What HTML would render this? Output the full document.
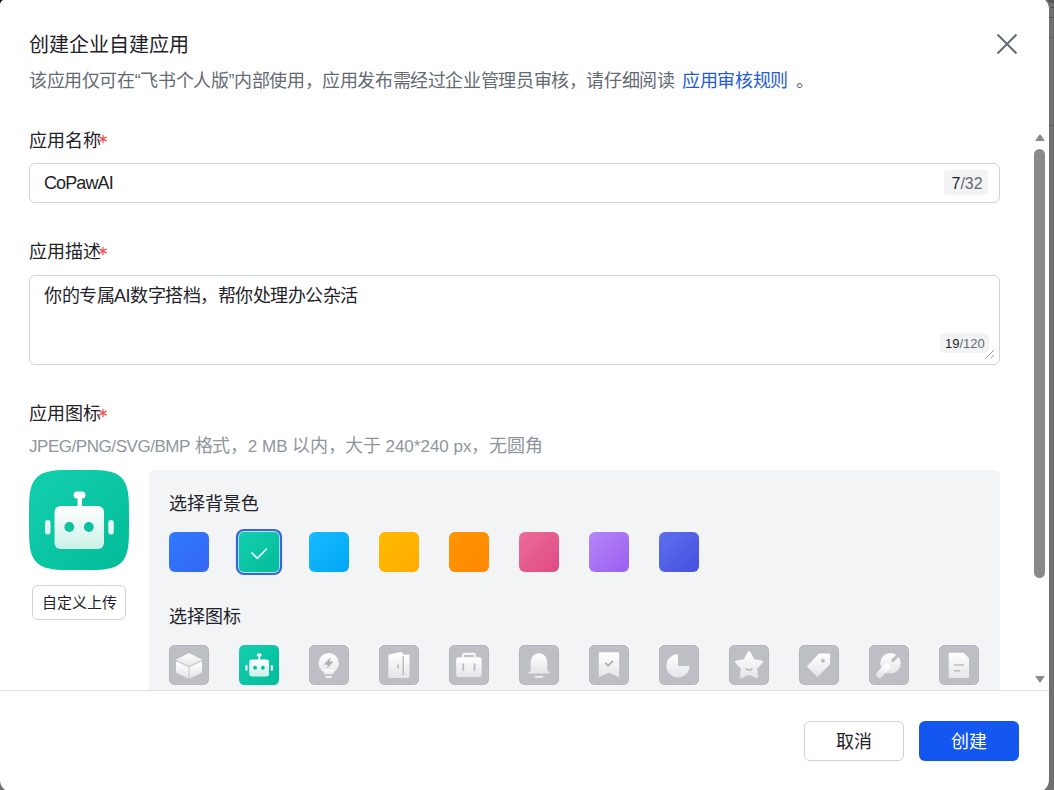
<!DOCTYPE html>
<html lang="zh-CN"><head><meta charset="utf-8">
<style>
*{box-sizing:border-box;margin:0;padding:0}
html,body{width:1054px;height:790px;overflow:hidden;background:#707070}
body{font-family:"Liberation Sans",sans-serif;color:#1f2329;position:relative}
.dlg{position:absolute;left:-12px;top:0;width:1061px;height:800px;background:#fff;border-radius:8px;overflow:hidden}
.a{position:absolute;white-space:nowrap}
.title{left:29px;top:32px;font-size:20px;line-height:26px;color:#1f2329}
.sub{left:29px;top:69px;font-size:18px;letter-spacing:-0.38px;line-height:24px;color:#646a73}
.sub a{color:#245bdb;text-decoration:none;margin:0 3px}
.lbl{font-size:18px;line-height:24px;color:#1f2329}
.lbl i{font-style:normal;color:#f54a45}
.inp{position:absolute;left:29px;width:971px;border:1px solid #d0d3d6;border-radius:6px;background:#fff}
.badge{position:absolute;background:#f2f3f5;border-radius:4px;color:#646a73}
.badge b{font-weight:normal;color:#1f2329}
.panel{position:absolute;left:149px;top:470px;width:851px;height:220px;background:#f3f4f6;border-radius:6px 6px 0 0}
.sw{position:absolute;width:40px;height:40px;border-radius:6px;top:532px}
.tile{position:absolute;width:40px;height:40px;border-radius:6px;top:645px;background:#bdbfc3;box-shadow:inset 0 0 0 1px #b3b6ba}
.c{font-size:18px;letter-spacing:-0.3px}
.btn{position:absolute;top:721px;width:100px;height:40px;border-radius:6px;font-size:18px;line-height:40px;text-align:center}
</style></head><body>
<div class="dlg" style="left:0;top:-2px;width:1049px;height:794px;border-radius:0 10px 12px 12px"></div>
<svg style="position:absolute;left:0;top:0" width="8" height="8"><path d="M0 0H3Q0.9 0.8 0 3.8Z" fill="#000"/></svg>
<div style="position:absolute;left:1049px;top:17px;width:5px;height:1px;background:#545454"></div>
<div style="position:absolute;left:1051px;top:7px;width:3px;height:1px;background:#4a4a4a"></div>
<div style="position:absolute;left:1049px;top:37px;width:5px;height:1px;background:#606060"></div>
<div style="position:absolute;left:1049px;top:125px;width:5px;height:1px;background:#5e5e5e"></div>
<div style="position:absolute;left:1048px;top:-3px;width:8px;height:6px;border-radius:50%;background:#555"></div>
<div style="position:absolute;left:0;top:0;width:1049px;height:790px">

<div class="a title">创建企业自建应用</div>
<svg class="a" style="left:994px;top:31px" width="26" height="26" viewBox="0 0 26 26"><path d="M3.5 3.5L22.5 22.5M22.5 3.5L3.5 22.5" stroke="#646a73" stroke-width="2" fill="none"/></svg>
<div class="a sub">该应用仅可在“飞书个人版”内部使用，应用发布需经过企业管理员审核，请仔细阅读 <a>应用审核规则</a> 。</div>

<div class="a lbl" style="left:29px;top:128.5px">应用名称</div>
<svg class="a" style="left:98.4px;top:134.4px" width="10" height="10"><path d="M5 0.85V9.15M1.4 2.9L8.6 7.1M1.4 7.1L8.6 2.9" stroke="#f0514c" stroke-width="1.25"/></svg>
<div class="inp" style="top:163px;height:40px"></div>
<div class="a" style="left:44px;top:171.5px;font-size:18px;line-height:22px;letter-spacing:-0.9px">CoPawAI</div>
<div class="badge" style="left:944px;top:170px;width:44px;height:25px"></div>
<div class="a" style="left:951.5px;top:172.5px;font-size:16px;line-height:22px;color:#646a73"><span style="color:#1f2329">7</span>/32</div>

<div class="a lbl" style="left:29px;top:240px">应用描述</div>
<svg class="a" style="left:98.4px;top:246.4px" width="10" height="10"><path d="M5 0.85V9.15M1.4 2.9L8.6 7.1M1.4 7.1L8.6 2.9" stroke="#f0514c" stroke-width="1.25"/></svg>
<div class="inp" style="top:275px;height:90px"></div>
<div class="a" style="left:44px;top:284px;font-size:18px;line-height:24px;letter-spacing:-0.5px">你的专属AI数字搭档，帮你处理办公杂活</div>
<div class="badge" style="left:940px;top:333px;width:49px;height:20px;border-radius:5px"></div>
<div class="a" style="left:945px;top:335px;font-size:13px;line-height:18px;color:#646a73"><span style="color:#1f2329">19</span>/120</div>
<svg class="a" style="left:984px;top:348px" width="12" height="12"><path d="M2 10L10 2M7 10L10 7" stroke="#9aa0a6" stroke-width="1"/></svg>

<div class="a lbl" style="left:29px;top:402px">应用图标</div>
<svg class="a" style="left:98.4px;top:408.3px" width="10" height="10"><path d="M5 0.85V9.15M1.4 2.9L8.6 7.1M1.4 7.1L8.6 2.9" stroke="#f0514c" stroke-width="1.25"/></svg>
<div class="a" style="left:29px;top:434px;font-size:17px;line-height:24px;color:#8f959e"><span style="letter-spacing:-0.45px">JPEG/PNG/SVG/BMP</span> <span class="c">格式，</span>2 MB <span class="c">以内，大于</span> 240*240 px<span class="c">，无圆角</span></div>

<!-- big icon -->
<svg class="a" style="left:29px;top:470px" width="100" height="100" viewBox="0 0 100 100">
<defs>
<linearGradient id="tg" x1="0" y1="0" x2="1" y2="1"><stop offset="0" stop-color="#14cfae"/><stop offset="1" stop-color="#02bc99"/></linearGradient>
<linearGradient id="wg" x1="0" y1="0" x2="0" y2="1"><stop offset="0" stop-color="#ffffff"/><stop offset="1" stop-color="#c9f1e7"/></linearGradient>
</defs>
<path d="M100.00 50.00 L99.91 65.64 L99.64 71.72 L99.18 76.27 L98.54 80.00 L97.71 83.18 L96.69 85.94 L95.47 88.37 L94.04 90.51 L92.39 92.39 L90.51 94.04 L88.37 95.47 L85.94 96.69 L83.18 97.71 L80.00 98.54 L76.27 99.18 L71.72 99.64 L65.64 99.91 L50.00 100.00 L34.36 99.91 L28.28 99.64 L23.73 99.18 L20.00 98.54 L16.82 97.71 L14.06 96.69 L11.63 95.47 L9.49 94.04 L7.61 92.39 L5.96 90.51 L4.53 88.37 L3.31 85.94 L2.29 83.18 L1.46 80.00 L0.82 76.27 L0.36 71.72 L0.09 65.64 L0.00 50.00 L0.09 34.36 L0.36 28.28 L0.82 23.73 L1.46 20.00 L2.29 16.82 L3.31 14.06 L4.53 11.63 L5.96 9.49 L7.61 7.61 L9.49 5.96 L11.63 4.53 L14.06 3.31 L16.82 2.29 L20.00 1.46 L23.73 0.82 L28.28 0.36 L34.36 0.09 L50.00 0.00 L65.64 0.09 L71.72 0.36 L76.27 0.82 L80.00 1.46 L83.18 2.29 L85.94 3.31 L88.37 4.53 L90.51 5.96 L92.39 7.61 L94.04 9.49 L95.47 11.63 L96.69 14.06 L97.71 16.82 L98.54 20.00 L99.18 23.73 L99.64 28.28 L99.91 34.36Z" fill="url(#tg)"/>
<rect x="25.5" y="36" width="49.5" height="43" rx="6" fill="url(#wg)"/>
<rect x="48.5" y="25" width="4.5" height="12" fill="#fff"/>
<rect x="44.5" y="21.5" width="12" height="7" rx="3.5" fill="#fff"/>
<circle cx="40.3" cy="57" r="4.9" fill="#0cc0a0"/>
<circle cx="59.8" cy="57" r="4.9" fill="#0cc0a0"/>
<rect x="16" y="50" width="5.5" height="14.5" rx="2.75" fill="#e6f8f3"/>
<rect x="79.3" y="50" width="5.5" height="14.5" rx="2.75" fill="#e6f8f3"/>
</svg>
<div class="a" style="left:32px;top:585px;width:94px;height:35px;border:1px solid #d0d3d6;border-radius:6px;font-size:15px;line-height:34px;text-align:center">自定义上传</div>

<div class="panel"></div>
<div class="a lbl" style="left:169px;top:492px;font-size:18px">选择背景色</div>
<div class="sw" style="left:169px;background:linear-gradient(135deg,#3179ff,#3267f2)"></div>
<div class="sw" style="left:239px;background:linear-gradient(135deg,#12cfad,#03bc99);box-shadow:0 0 0 0.9px #a9e9f2,0 0 0 3.1px #3a63dc;border-radius:5px"></div>
<svg class="a" style="left:239px;top:532px" width="40" height="40"><path d="M12.5 20.5L18.3 26.3L28 16.5" stroke="#fff" stroke-width="1.6" fill="none"/></svg>
<div class="sw" style="left:309px;background:linear-gradient(135deg,#16bbff,#00a6f5)"></div>
<div class="sw" style="left:379px;background:linear-gradient(135deg,#ffbb00,#ffab00)"></div>
<div class="sw" style="left:449px;background:linear-gradient(135deg,#ff9500,#ff8800)"></div>
<div class="sw" style="left:519px;background:linear-gradient(135deg,#ec6c9b,#df4a83)"></div>
<div class="sw" style="left:589px;background:linear-gradient(135deg,#b486f7,#9b5ff0)"></div>
<div class="sw" style="left:659px;background:linear-gradient(135deg,#5c70ec,#4650e0)"></div>

<div class="a lbl" style="left:169px;top:605px;font-size:18px">选择图标</div>
<svg style="position:absolute;width:0;height:0"><defs>
<linearGradient id="gw" x1="0" y1="0" x2="0" y2="1"><stop offset="0" stop-color="#ffffff"/><stop offset="1" stop-color="#e4e6e9"/></linearGradient>
<linearGradient id="tg2" x1="0" y1="0" x2="1" y2="1"><stop offset="0" stop-color="#14cfae"/><stop offset="1" stop-color="#02bc99"/></linearGradient>
<linearGradient id="wg2" x1="0" y1="0" x2="0" y2="1"><stop offset="0" stop-color="#ffffff"/><stop offset="1" stop-color="#c9f1e7"/></linearGradient>
</defs></svg>
<svg class="a tl" style="left:169px;top:645px" width="40" height="40"><rect x=".5" y=".5" width="39" height="39" rx="5" fill="#bcbfc3" stroke="#b2b5b9"/>
<g fill="url(#gw)" stroke="url(#gw)" stroke-width="1.2" stroke-linejoin="round"><path d="M20 8.8L32.2 14.8L20 20.6L7.8 14.8Z"/><path d="M7.6 17L19 22.6V32.8L7.6 27.2Z"/><path d="M21 22.6L32.4 17V27.2L21 32.8Z"/></g></svg>
<svg class="a tl" style="left:239px;top:645px" width="40" height="40" viewBox="0 0 100 100"><rect x="0" y="0" width="100" height="100" rx="13" fill="url(#tg2)"/>
<rect x="25.5" y="36" width="49.5" height="43" rx="6" fill="url(#wg2)"/><rect x="48.5" y="25" width="4.5" height="12" fill="#fff"/><rect x="44.5" y="21.5" width="12" height="7" rx="3.5" fill="#fff"/><circle cx="40.3" cy="57" r="4.9" fill="#0cc0a0"/><circle cx="59.8" cy="57" r="4.9" fill="#0cc0a0"/><rect x="16" y="50" width="5.5" height="14.5" rx="2.75" fill="#e6f8f3"/><rect x="79.3" y="50" width="5.5" height="14.5" rx="2.75" fill="#e6f8f3"/></svg>
<svg class="a tl" style="left:309px;top:645px" width="40" height="40"><rect x=".5" y=".5" width="39" height="39" rx="5" fill="#bcbfc3" stroke="#b2b5b9"/>
<g fill="url(#gw)"><circle cx="19.7" cy="18.3" r="10.2"/><path d="M13.6 24.5L25.8 24.5L24 29.2L15.4 29.2Z"/><rect x="16.2" y="30.9" width="6.9" height="2" rx="1"/></g>
<path d="M21.3 13.2L15.4 19.3H19.3L18.3 22.8L23.9 16.9H20.2Z" fill="#a9acb0" stroke="#a9acb0" stroke-width=".6" stroke-linejoin="round"/></svg>
<svg class="a tl" style="left:379px;top:645px" width="40" height="40"><rect x=".5" y=".5" width="39" height="39" rx="5" fill="#bcbfc3" stroke="#b2b5b9"/>
<g fill="url(#gw)" stroke="url(#gw)" stroke-width="1" stroke-linejoin="round"><path d="M9.9 10L23 7.3V32.5H9.9Z"/><path d="M23 10H30V32.5H23Z"/></g>
<path d="M24.2 11V30" stroke="#b9bcc0" stroke-width="1.5"/><path d="M19.1 19.6V23.2" stroke="#b0b3b7" stroke-width="1.5"/></svg>
<svg class="a tl" style="left:449px;top:645px" width="40" height="40"><rect x=".5" y=".5" width="39" height="39" rx="5" fill="#bcbfc3" stroke="#b2b5b9"/>
<g fill="url(#gw)"><rect x="7.2" y="12.2" width="25.5" height="19.8" rx="2.5"/></g><path d="M14.2 12.5V10.1Q14.2 8.9 15.4 8.9H24.6Q25.8 8.9 25.8 10.1V12.5" fill="none" stroke="#f4f5f6" stroke-width="2.2"/>
<path d="M14.2 18.4V25.8M25.5 18.4V25.8" stroke="#bcbfc3" stroke-width="1.9"/></svg>
<svg class="a tl" style="left:519px;top:645px" width="40" height="40"><rect x=".5" y=".5" width="39" height="39" rx="5" fill="#bcbfc3" stroke="#b2b5b9"/>
<g fill="url(#gw)"><path d="M20 8.2C24.5 8.2 28.3 11.8 28.3 17.5V25.6L31.8 28.5H8.2L11.7 25.6V17.5C11.7 11.8 15.5 8.2 20 8.2Z"/><rect x="15.6" y="30.9" width="8.6" height="1.8" rx=".9"/></g></svg>
<svg class="a tl" style="left:589px;top:645px" width="40" height="40"><rect x=".5" y=".5" width="39" height="39" rx="5" fill="#bcbfc3" stroke="#b2b5b9"/>
<g fill="url(#gw)"><path d="M11.2 7.3H28.7Q30.1 7.3 30.1 8.7V32.2L20 27.8L9.8 32.2V8.7Q9.8 7.3 11.2 7.3Z"/></g>
<path d="M16.4 17.8L19.2 20.6L24 15.8" fill="none" stroke="#a9acb0" stroke-width="1.7"/></svg>
<svg class="a tl" style="left:659px;top:645px" width="40" height="40"><rect x=".5" y=".5" width="39" height="39" rx="5" fill="#bcbfc3" stroke="#b2b5b9"/>
<g fill="url(#gw)"><path d="M19 20.9V9.3A11.6 11.6 0 1 0 30.6 20.9Z"/></g></svg>
<svg class="a tl" style="left:729px;top:645px" width="40" height="40"><rect x=".5" y=".5" width="39" height="39" rx="5" fill="#bcbfc3" stroke="#b2b5b9"/>
<g fill="url(#gw)" stroke="url(#gw)" stroke-width="3.2" stroke-linejoin="round"><path d="M20.00 8.00 L24.00 15.50 L32.36 16.98 L26.47 23.10 L27.64 31.52 L20.00 27.80 L12.36 31.52 L13.53 23.10 L7.64 16.98 L16.00 15.50Z"/></g>
<path d="M16.6 23.4Q20 26.4 23.4 23.4" fill="none" stroke="#b3b6ba" stroke-width="1.4"/></svg>
<svg class="a tl" style="left:799px;top:645px" width="40" height="40"><rect x=".5" y=".5" width="39" height="39" rx="5" fill="#bcbfc3" stroke="#b2b5b9"/>
<g fill="url(#gw)" stroke="url(#gw)" stroke-width="1.6" stroke-linejoin="round"><path d="M20.3 9.3H30.3V19L18.4 30.9L8.9 21.5Z"/></g><circle cx="23.9" cy="15.7" r="2" fill="#bcbfc3"/></svg>
<svg class="a tl" style="left:869px;top:645px" width="40" height="40"><rect x=".5" y=".5" width="39" height="39" rx="5" fill="#bcbfc3" stroke="#b2b5b9"/>
<g fill="url(#gw)"><circle cx="21.5" cy="18.2" r="10.3"/></g><path d="M18 22L10.6 29.4" stroke="url(#gw)" stroke-width="6.6" stroke-linecap="round"/>
<path d="M23.8 15.4L30 9.2" stroke="#bcbfc3" stroke-width="3.4" stroke-linecap="round"/></svg>
<svg class="a tl" style="left:939px;top:645px" width="40" height="40"><rect x=".5" y=".5" width="39" height="39" rx="5" fill="#bcbfc3" stroke="#b2b5b9"/>
<g fill="url(#gw)" stroke="url(#gw)" stroke-width="1.2" stroke-linejoin="round"><path d="M10.3 8.3H24.5L29.4 13.4V32.4H10.3Z"/></g>
<path d="M14.8 19.9H24.9M14.8 25.8H21" stroke="#b9bcc0" stroke-width="1.5"/></svg>


<!-- footer -->
<div class="a" style="left:0;top:690px;width:1049px;height:1px;background:#dee0e3"></div>
<div class="btn" style="left:804px;border:1px solid #d0d3d6;background:#fff;color:#1f2329">取消</div>
<div class="btn" style="left:919px;background:#1456f0;color:#fff;line-height:42px">创建</div>

<!-- scrollbar -->
<svg class="a" style="left:1034px;top:132px" width="12" height="10"><path d="M1.8 8.6L6 2.6L10.2 8.6Z" fill="#8a8a8a" stroke="#8a8a8a" stroke-width="1" stroke-linejoin="round"/></svg>
<div class="a" style="left:1034px;top:149px;width:11px;height:429px;border-radius:5.5px;background:#8a8a8a"></div>
<svg class="a" style="left:1033.5px;top:674px" width="12" height="10"><path d="M1.8 2.4L10.2 2.4L6 8.2Z" fill="#8a8a8a" stroke="#8a8a8a" stroke-width="1" stroke-linejoin="round"/></svg>
</div>
</body></html>
